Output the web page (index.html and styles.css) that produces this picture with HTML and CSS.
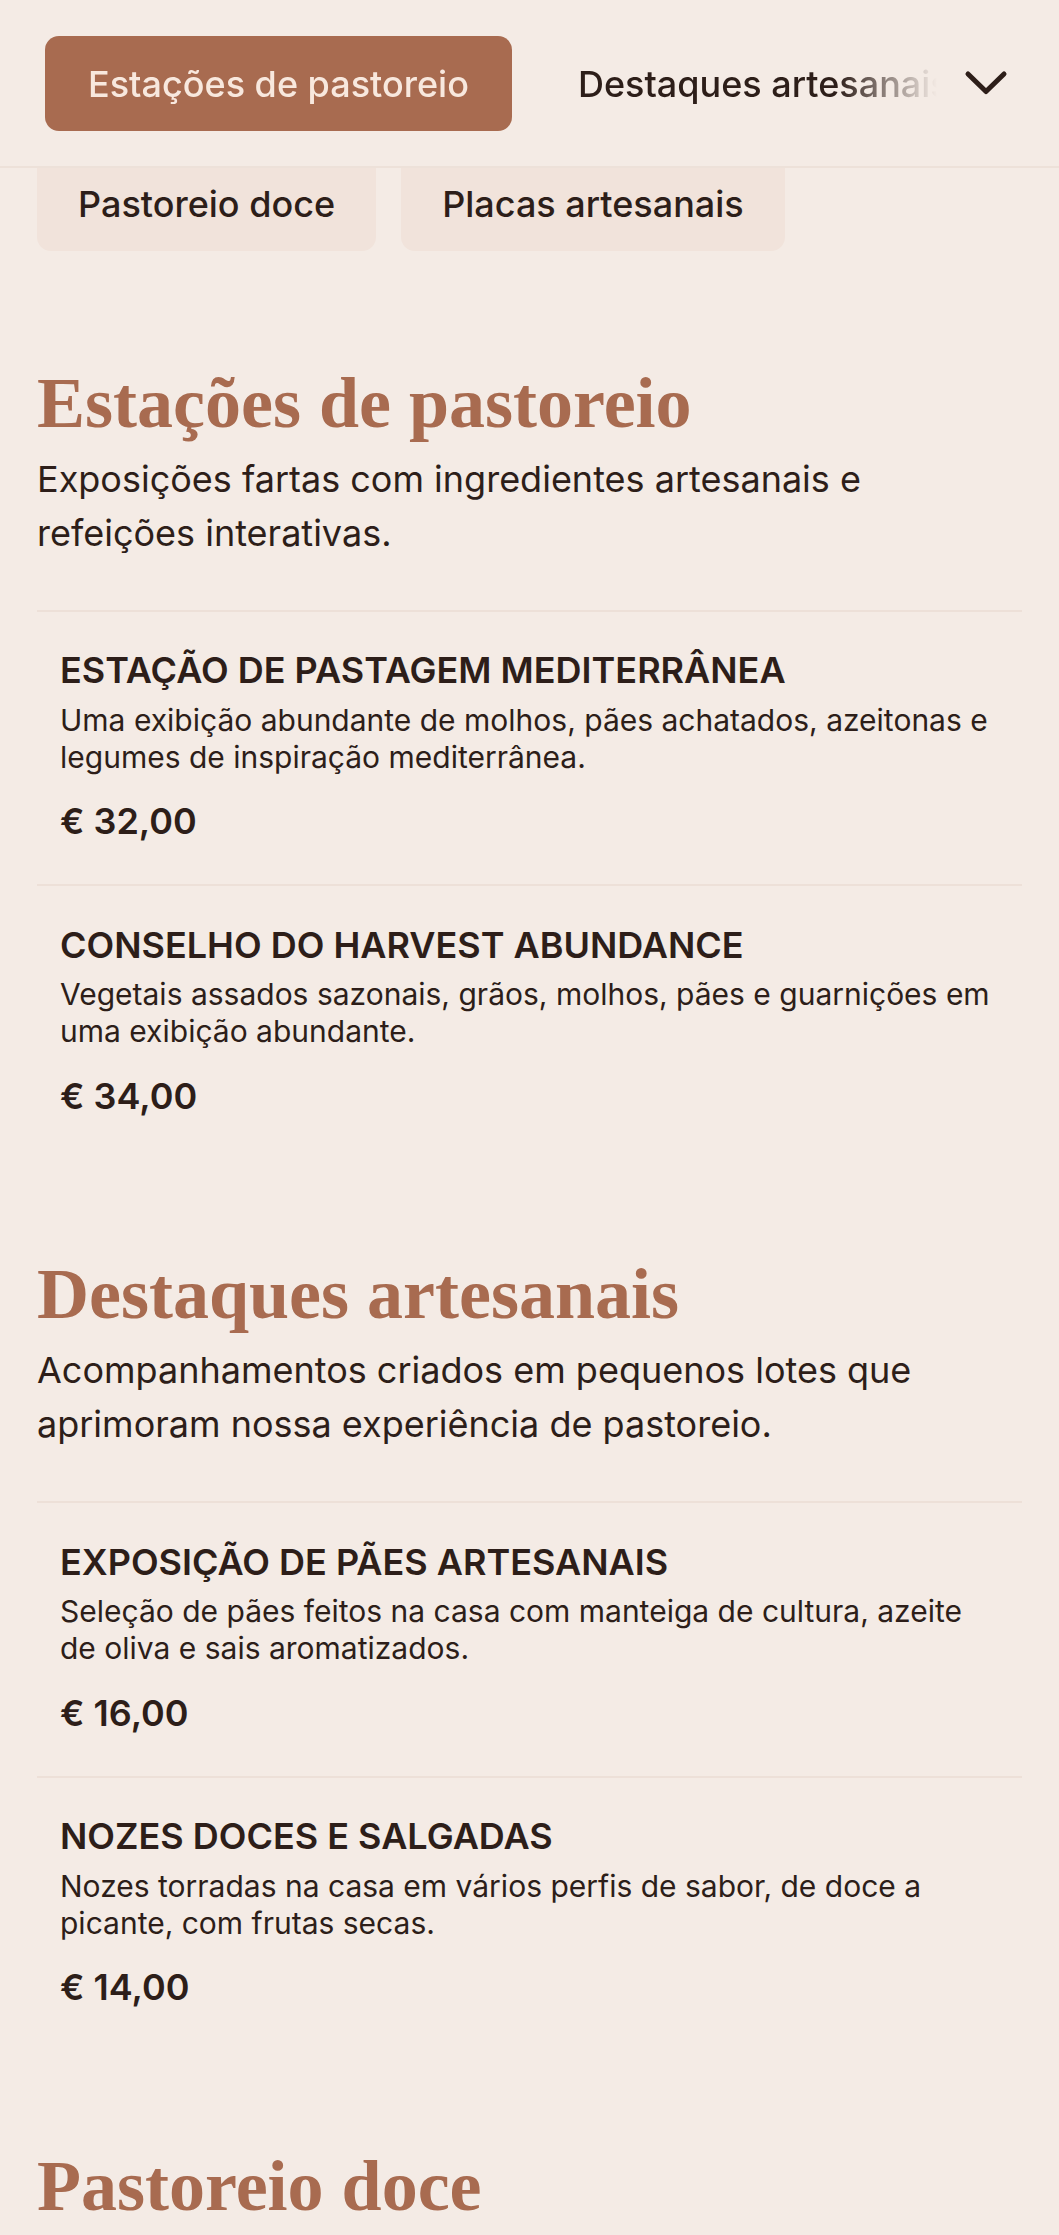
FILE: index.html
```html
<!DOCTYPE html>
<html lang="pt">
<head>
<meta charset="utf-8">
<title>Menu</title>
<link rel="stylesheet" href="styles.css">
</head>
<body>
<header class="header">
  <nav class="tabs">
    <a class="tab tab-active">Estações de pastoreio</a>
    <a class="tab">Destaques artesanais</a>
  </nav>
  <button class="toggle" aria-label="Mostrar categorias">
    <svg width="44" height="27" viewBox="0 0 44 27"><polyline points="4,4 22,21.5 40,4" fill="none" stroke="#2d1e19" stroke-width="5" stroke-linecap="round" stroke-linejoin="round"/></svg>
  </button>
</header>
<div class="chips">
  <a class="chip">Pastoreio doce</a>
  <a class="chip">Placas artesanais</a>
</div>
<main class="main">
  <section class="section">
    <h2 class="section-title">Estações de pastoreio</h2>
    <p class="section-desc">Exposições fartas com ingredientes artesanais e refeições interativas.</p>
    <ul class="items">
      <li class="item">
        <h3 class="item-name">Estação de pastagem mediterrânea</h3>
        <p class="item-desc">Uma exibição abundante de molhos, pães achatados, azeitonas e legumes de inspiração mediterrânea.</p>
        <p class="item-price">€ 32,00</p>
      </li>
      <li class="item">
        <h3 class="item-name">Conselho do Harvest Abundance</h3>
        <p class="item-desc">Vegetais assados sazonais, grãos, molhos, pães e guarnições em uma exibição abundante.</p>
        <p class="item-price">€ 34,00</p>
      </li>
    </ul>
  </section>
  <section class="section">
    <h2 class="section-title">Destaques artesanais</h2>
    <p class="section-desc">Acompanhamentos criados em pequenos lotes que aprimoram nossa experiência de pastoreio.</p>
    <ul class="items">
      <li class="item">
        <h3 class="item-name">Exposição de pães artesanais</h3>
        <p class="item-desc">Seleção de pães feitos na casa com manteiga de cultura, azeite de oliva e sais aromatizados.</p>
        <p class="item-price">€ 16,00</p>
      </li>
      <li class="item">
        <h3 class="item-name">Nozes doces e salgadas</h3>
        <p class="item-desc">Nozes torradas na casa em vários perfis de sabor, de doce a picante, com frutas secas.</p>
        <p class="item-price">€ 14,00</p>
      </li>
    </ul>
  </section>
  <section class="section">
    <h2 class="section-title">Pastoreio doce</h2>
  </section>
</main>
</body>
</html>
```
FILE: styles.css
```css
html {
  background: #f4ebe5;
}
body {
  margin: 0;
  background: #f4ebe5;
  color: #2d1e19;
  font-family: Inter, "Noto Sans", sans-serif;
}
.header {
  height: 168px;
  box-sizing: border-box;
  padding: 36px 32px 0 45px;
  border-bottom: 2px solid #ede1d9;
  display: flex;
  align-items: flex-start;
}
.tabs {
  flex: 1;
  display: flex;
  gap: 23px;
  overflow: hidden;
  -webkit-mask-image: linear-gradient(to right, #000 calc(100% - 108px), transparent calc(100% - 8px));
  mask-image: linear-gradient(to right, #000 calc(100% - 108px), transparent calc(100% - 8px));
}
.tab {
  flex: none;
  height: 95px;
  box-sizing: border-box;
  padding: 0 43px;
  border-radius: 14px;
  display: flex;
  align-items: center;
  font-size: 36px;
  font-weight: 500;
  color: #2d1e19;
  white-space: nowrap;
}
.tab-active {
  background: #a86b50;
  color: #f8e8de;
}
.toggle {
  flex: none;
  width: 82px;
  height: 95px;
  padding: 0;
  border: 0;
  background: transparent;
  display: flex;
  align-items: center;
  justify-content: center;
}
.toggle svg {
  display: block;
}
.chips {
  display: flex;
  gap: 25px;
  padding-left: 37px;
}
.chip {
  height: 83px;
  box-sizing: border-box;
  padding: 0 41px 11px;
  border-radius: 0 0 14px 14px;
  background: #f1e3db;
  display: flex;
  align-items: center;
  font-size: 36px;
  font-weight: 500;
  white-space: nowrap;
}
.main {
  padding: 16px 37px 40px;
}
.section {
  padding-top: 92.5px;
}
.section-title {
  margin: 0;
  font-family: "Liberation Serif", "DejaVu Serif", serif;
  font-weight: 700;
  font-size: 72px;
  line-height: 86px;
  color: #a86b50;
}
.section-desc {
  margin: 6px 0 0;
  font-size: 36px;
  line-height: 54px;
  padding-right: 40px;
}
.items {
  list-style: none;
  margin: 50px 0 0;
  padding: 0;
}
.item {
  border-top: 2px solid #ede0d8;
  padding: 36.5px 20px 41px 23px;
}
.item-name {
  margin: 0;
  font-size: 36px;
  line-height: 44px;
  font-weight: 600;
  text-transform: uppercase;
}
.item-desc {
  margin: 9.5px 0 0;
  font-size: 30px;
  line-height: 37px;
}
.item-price {
  margin: 23.5px 0 0;
  font-size: 36px;
  line-height: 44px;
  font-weight: 600;
}
```
